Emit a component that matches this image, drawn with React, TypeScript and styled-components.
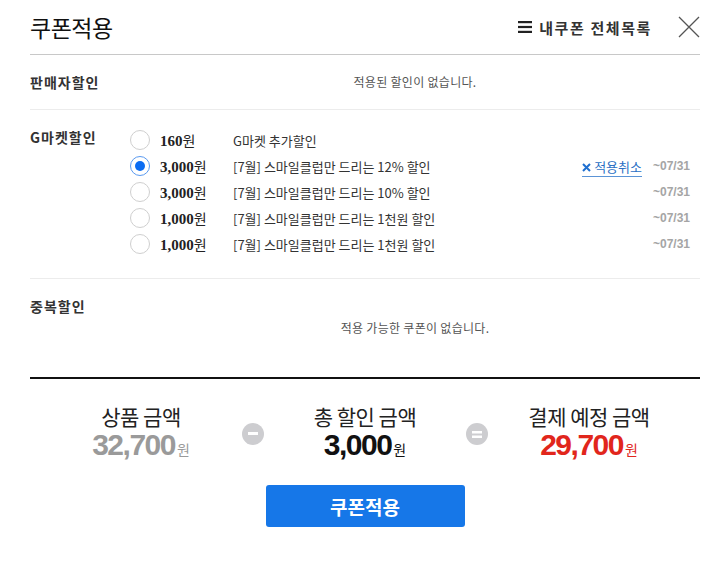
import * as React from 'react';
import styled, { createGlobalStyle } from 'styled-components';

const GlobalStyle = createGlobalStyle`
  body {
    margin: 0;
    background: #fff;
    font-family: "Noto Sans CJK KR", "Noto Sans", sans-serif;
    color: #222;
  }
`;

interface Coupon {
  amount: string;
  title: string;
  until?: string;
  checked?: boolean;
}

const coupons: Coupon[] = [
  { amount: '160', title: 'G마켓 추가할인' },
  { amount: '3,000', title: '[7월] 스마일클럽만 드리는 12% 할인', until: '~07/31', checked: true },
  { amount: '3,000', title: '[7월] 스마일클럽만 드리는 10% 할인', until: '~07/31' },
  { amount: '1,000', title: '[7월] 스마일클럽만 드리는 1천원 할인', until: '~07/31' },
  { amount: '1,000', title: '[7월] 스마일클럽만 드리는 1천원 할인', until: '~07/31' },
];

const Layer = styled.div`
  width: 727px;
  box-sizing: border-box;
  padding: 0 27px 0 30px;
`;

const Header = styled.div`
  height: 55px;
  display: flex;
  align-items: center;
  border-bottom: 1px solid #c8c8c8;
  box-sizing: border-box;
`;

const Title = styled.h1`
  margin: 0;
  flex: 1;
  font-size: 23px;
  font-weight: 400;
  color: #111;
  letter-spacing: -0.5px;
`;

const AllLink = styled.a`
  display: flex;
  align-items: center;
  gap: 7px;
  font-size: 15px;
  font-weight: 700;
  letter-spacing: 1.6px;
  color: #333;
  text-decoration: none;
  margin-right: 26px;
`;

const CloseButton = styled.button`
  border: 0;
  background: none;
  padding: 0;
  width: 22px;
  height: 22px;
  display: flex;
  cursor: pointer;
`;

const Section = styled.div<{ $pad: string; $last?: boolean }>`
  display: flex;
  padding: ${(p) => p.$pad};
  border-bottom: 1px solid ${(p) => (p.$last ? 'transparent' : '#ececec')};
`;

const SectionLabel = styled.div`
  width: 100px;
  flex-shrink: 0;
  font-size: 14px;
  font-weight: 700;
  letter-spacing: 1px;
  color: #333;
  line-height: 20px;
`;

const Empty = styled.div<{ $top?: string }>`
  flex: 1;
  text-align: center;
  font-size: 12px;
  letter-spacing: 0.3px;
  color: #555;
  line-height: 20px;
  padding-top: ${(p) => p.$top || '0'};
`;

const List = styled.ul`
  list-style: none;
  margin: 0;
  padding: 0;
  flex: 1;
`;

const Item = styled.li`
  display: flex;
  align-items: center;
  height: 26px;
`;

const Radio = styled.span<{ $on?: boolean }>`
  width: 20px;
  height: 20px;
  box-sizing: border-box;
  border-radius: 50%;
  border: 1px solid ${(p) => (p.$on ? '#5a9af0' : '#cfcfcf')};
  display: flex;
  align-items: center;
  justify-content: center;
  margin-right: 10px;
  flex-shrink: 0;
  &::after {
    content: '';
    width: 10px;
    height: 10px;
    border-radius: 50%;
    background: ${(p) => (p.$on ? '#0b6cf2' : 'transparent')};
  }
`;

const Amount = styled.span`
  width: 73px;
  flex-shrink: 0;
  font-family: "Liberation Serif", "Noto Sans CJK KR", serif;
  font-size: 15px;
  font-weight: 700;
  color: #222;
  small {
    font-family: "Noto Sans CJK KR", sans-serif;
    font-size: 14px;
    font-weight: 400;
  }
`;

const Desc = styled.span`
  flex: 1;
  font-size: 13px;
  color: #333;
`;

const Cancel = styled.a`
  display: flex;
  align-items: center;
  gap: 3px;
  font-size: 13px;
  color: #2a6fc4;
  text-decoration: none;
  border-bottom: 1px solid #5b94d6;
  line-height: 16px;
  margin-top: 4px;
  padding-bottom: 1px;
`;

const Until = styled.span`
  width: 48px;
  text-align: right;
  margin-right: 10px;
  font-family: "Liberation Sans", sans-serif;
  font-size: 12px;
  font-weight: 700;
  color: #a5a5a5;
`;

const Divider = styled.hr`
  margin: 0;
  border: 0;
  border-top: 2px solid #111;
`;

const Summary = styled.div`
  display: grid;
  grid-template-columns: 200px 24px 200px 24px 200px;
  align-items: center;
  padding: 24px 0 0 11px;
`;

const Block = styled.div`
  text-align: center;
`;

const BlockLabel = styled.div`
  font-size: 21px;
  line-height: 26px;
  color: #222;
  letter-spacing: -0.5px;
`;

const BlockValue = styled.div<{ $color: string }>`
  font-family: "Liberation Sans", sans-serif;
  font-weight: 700;
  font-size: 30px;
  letter-spacing: -1.5px;
  line-height: 32px;
  color: ${(p) => p.$color};
  small {
    font-family: "Noto Sans CJK KR", sans-serif;
    font-size: 14px;
    font-weight: 400;
    letter-spacing: 0;
    margin-left: 2px;
  }
`;

const Operator = styled.span`
  width: 22px;
  height: 22px;
  border-radius: 50%;
  background: #cdcdd0;
  display: flex;
  align-items: center;
  justify-content: center;
  justify-self: center;
`;

const ApplyButton = styled.button`
  display: block;
  margin: 20px auto 0;
  width: 199px;
  height: 42px;
  border: 0;
  border-radius: 3px;
  background: #1677e8;
  color: #fff;
  font-family: "Noto Sans CJK KR", sans-serif;
  font-size: 19px;
  font-weight: 700;
  cursor: pointer;
`;

const MenuIcon = () => (
  <svg width="14" height="12" viewBox="0 0 14 12">
    <rect x="0" y="0" width="14" height="2.2" fill="#222" />
    <rect x="0" y="4.9" width="14" height="2.2" fill="#222" />
    <rect x="0" y="9.8" width="14" height="2.2" fill="#222" />
  </svg>
);

const CloseIcon = () => (
  <svg width="22" height="22" viewBox="0 0 22 22">
    <path d="M1 1 L21 21 M21 1 L1 21" stroke="#555" strokeWidth="1.3" fill="none" />
  </svg>
);

const App = () => {
  return (
    <Layer>
      <GlobalStyle />
      <Header>
        <Title>쿠폰적용</Title>
        <AllLink href="#">
          <MenuIcon />
          내쿠폰 전체목록
        </AllLink>
        <CloseButton aria-label="닫기">
          <CloseIcon />
        </CloseButton>
      </Header>

      <Section $pad="17px 0 17px">
        <SectionLabel>판매자할인</SectionLabel>
        <Empty>적용된 할인이 없습니다.</Empty>
      </Section>

      <Section $pad="17px 0 21px">
        <SectionLabel>G마켓할인</SectionLabel>
        <List>
          {coupons.map((c, i) => (
            <Item key={i}>
              <Radio $on={c.checked} />
              <Amount>
                {c.amount}
                <small>원</small>
              </Amount>
              <Desc>{c.title}</Desc>
              {c.checked && (
                <Cancel href="#">
                  <svg width="9" height="9" viewBox="0 0 9 9">
                    <path d="M1 1 L8 8 M8 1 L1 8" stroke="#1f6fd0" strokeWidth="2" />
                  </svg>
                  적용취소
                </Cancel>
              )}
              <Until>{c.until}</Until>
            </Item>
          ))}
        </List>
      </Section>

      <Section $pad="17px 0 38px" $last>
        <SectionLabel>중복할인</SectionLabel>
        <Empty $top="22px">적용 가능한 쿠폰이 없습니다.</Empty>
      </Section>

      <Divider />

      <Summary>
        <Block>
          <BlockLabel>상품 금액</BlockLabel>
          <BlockValue $color="#9a9a9a">
            32,700<small>원</small>
          </BlockValue>
        </Block>
        <Operator>
          <svg width="10" height="4" viewBox="0 0 10 4">
            <rect width="10" height="3" fill="#fff" />
          </svg>
        </Operator>
        <Block>
          <BlockLabel>총 할인 금액</BlockLabel>
          <BlockValue $color="#111">
            3,000<small>원</small>
          </BlockValue>
        </Block>
        <Operator>
          <svg width="10" height="9" viewBox="0 0 10 9">
            <rect y="1" width="10" height="2.5" fill="#fff" />
            <rect y="5.5" width="10" height="2.5" fill="#fff" />
          </svg>
        </Operator>
        <Block>
          <BlockLabel>결제 예정 금액</BlockLabel>
          <BlockValue $color="#e1261c">
            29,700<small>원</small>
          </BlockValue>
        </Block>
      </Summary>

      <ApplyButton>쿠폰적용</ApplyButton>
    </Layer>
  );
};

export default App;
